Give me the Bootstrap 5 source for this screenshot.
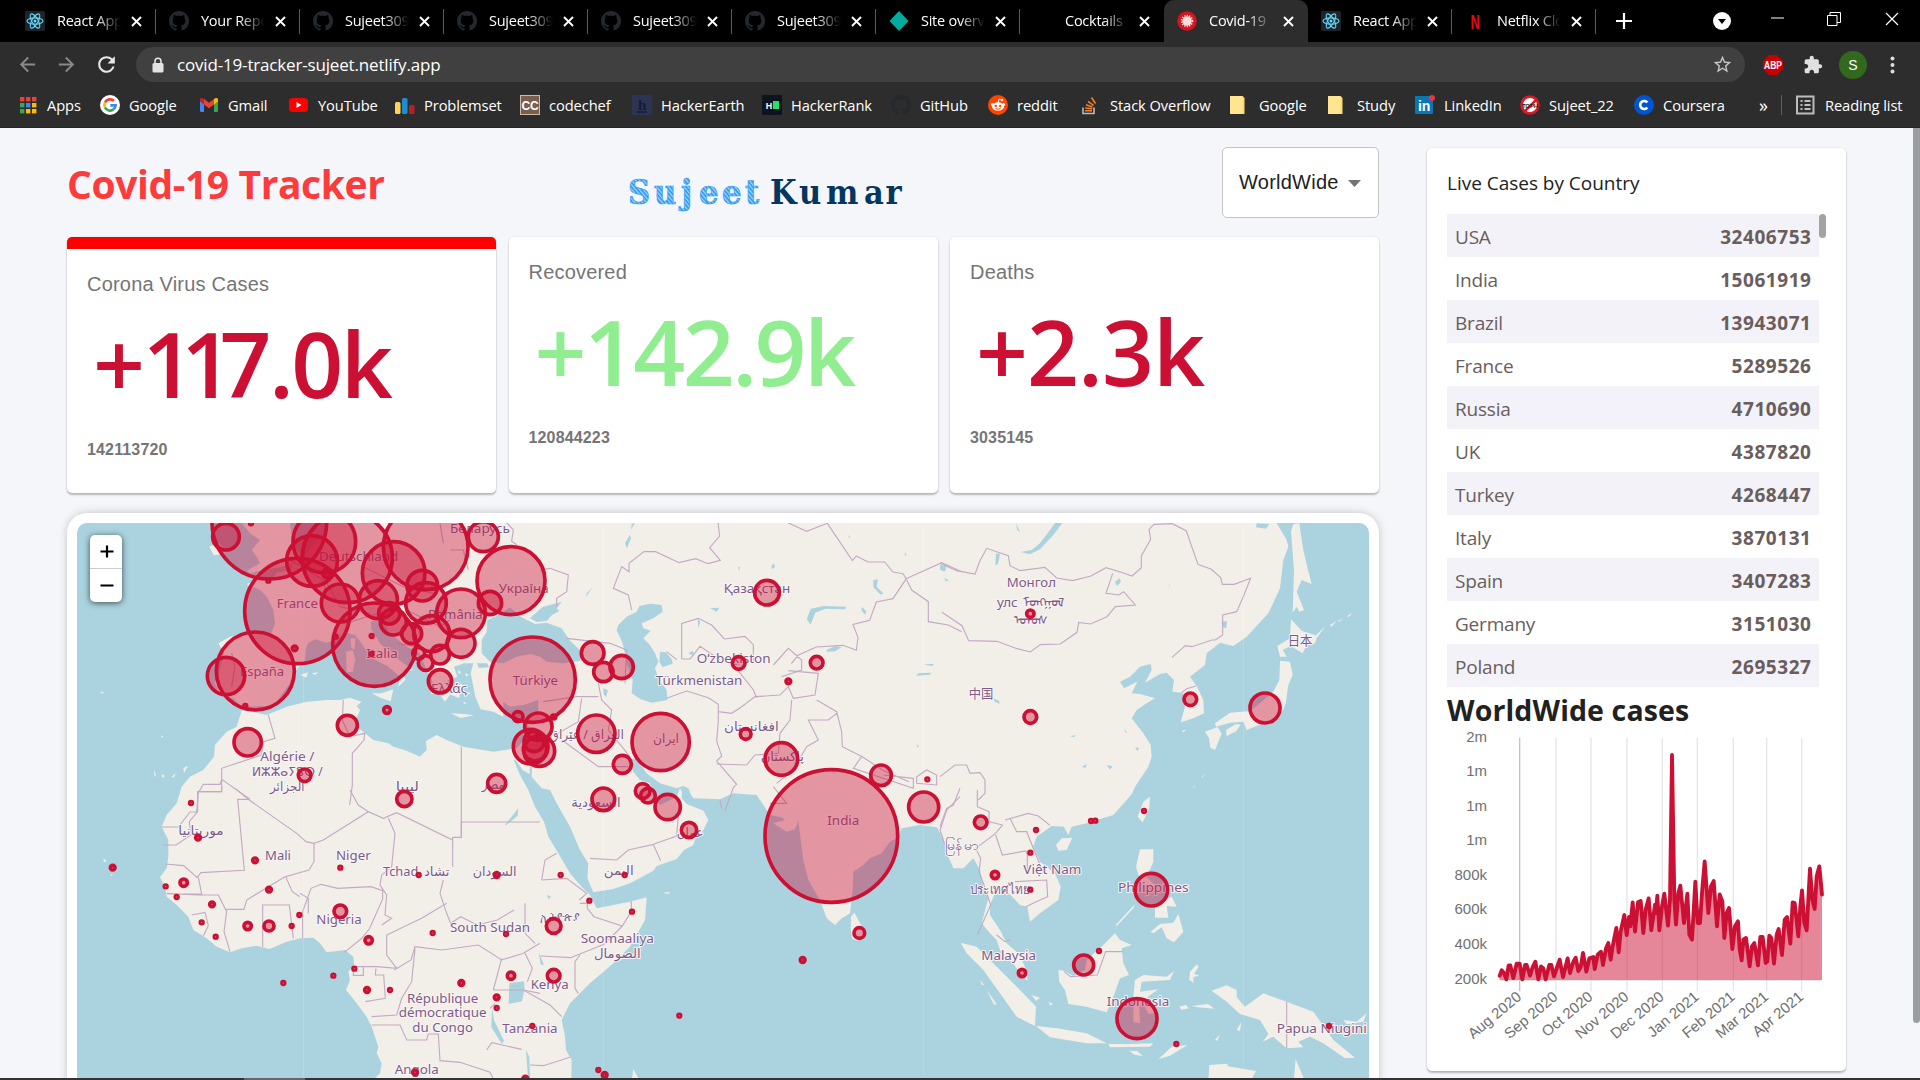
<!DOCTYPE html>
<html lang="en">
<head>
<meta charset="utf-8">
<title>Covid-19 Tracker</title>
<link href="https://cdn.jsdelivr.net/npm/bootstrap@5.3.0/dist/css/bootstrap.min.css" rel="stylesheet">
<style>
body{height:1080px;width:1920px;overflow:hidden;background:#f5f6fa;font-family:"Open Sans","Noto Sans",sans-serif;color:#212121}
svg{display:block;flex:none}
.tabstrip{height:42px;background:#000;padding-left:12px}
.tab{width:144px;height:42px;padding:0 14px 0 13px;color:#fff;font-size:14.5px;letter-spacing:-.25px;position:relative}
.tab:not(.on):not(.nosep)::after{content:"";position:absolute;right:0;top:9px;width:1px;height:25px;background:#5a5a5a}
.tab.on{background:#2d2d2d;border-radius:10px 10px 0 0}
.tab-name{width:64px;margin-left:12px;overflow:hidden;white-space:nowrap;-webkit-mask-image:linear-gradient(90deg,#000 60%,transparent)}
.toolbar{height:44px;background:#2d2d2d;padding-top:5px}
.toolbar-nav{height:35px;padding-left:16px}
.toolbar-ext{height:35px}
.omni{height:35px;width:1609px;background:#404040;border-radius:18px;margin-left:17px;padding:0 12px 0 15px;color:#fff;font-size:17px;letter-spacing:-.17px}
.bookmarks{height:42px;background:#2d2d2d;color:#fff;font-size:14.7px;letter-spacing:-.1px;padding:0 0 3px 18px;border-bottom:1px solid #232323}
.bm{white-space:nowrap}
.bm svg{margin-right:9px}
.page{height:950px;padding:19px 0 0 67px;overflow:hidden}
.main-col{width:1312px}
.head-row{height:90px}
.brand{font-size:39px;font-weight:700;color:#fc3c3c;letter-spacing:-.4px;line-height:1;margin-top:17px;width:500px}
.logo{margin-left:-234px}
.country-pick{width:157px;height:71px;border:1px solid #c4c4c4;border-radius:5px;background:#fff;font-family:"Liberation Sans",Arial,sans-serif;font-size:20px;padding:0 0 2px 16px;letter-spacing:.25px}
.stat{border:0;border-radius:5px;height:256px;background:#fff;box-shadow:0 2px 2px rgba(0,0,0,.24),0 0 2px rgba(0,0,0,.12);padding:23px 20px 0;overflow:hidden;flex:1 1 0}
.stat.active{border-top:12px solid red}
.stat-label{font:20px/24px "Liberation Sans",Arial,sans-serif;color:#757575;letter-spacing:.2px}
.stat-num{font-size:91px;font-weight:600;line-height:100px;color:#cc1034;margin-top:17px;padding-left:6px;letter-spacing:-2.6px;white-space:nowrap}
.stat-num.good{color:#90ee90}
.stat-num.wide{letter-spacing:-1px}
.tight{letter-spacing:-13.500px}
.stat-total{font:bold 16px/20px "Liberation Sans",Arial,sans-serif;color:#757575;margin-top:27px;letter-spacing:.15px}
.mapbox{margin-top:20px;height:600px;border-radius:20px;background:#fff;padding:10px;box-shadow:0 0 10px -1px rgba(0,0,0,.25)}
.mapbox-in{position:relative;border-radius:10px;overflow:hidden;height:590px}
.zoomer{position:absolute;left:13px;top:12px;width:32px;border-radius:5px;background:#fff;box-shadow:0 1px 6px rgba(0,0,0,.65);overflow:hidden}
.zoomer div{height:33px;padding-left:2px}
.zoomer div:first-child{border-bottom:1px solid #ccc;height:34px}
.side{width:419px;height:923px;border:0;border-radius:5px;background:#fff;margin:1px 0 0 48px;padding:20px;box-shadow:0 2px 2px rgba(0,0,0,.24),0 0 2px rgba(0,0,0,.12);position:relative}
.side-title{font-size:19px;line-height:30px;letter-spacing:-.02px;height:46px}
.crow{height:43px;width:372px;padding:3px 8px 0;font-size:19px;color:#6a5d5d;letter-spacing:-.2px}
.crow:nth-child(odd){background:#f3f2f8}
.crow b{font-weight:700;letter-spacing:.55px;margin-right:-.5px}
.list-thumb{position:absolute;left:392px;top:66px;width:7px;height:24px;border-radius:4px;background:#a3a3a3}
.chart-title{font-size:28.5px;font-weight:700;line-height:36px;margin:5px 0 0;letter-spacing:.12px}
.pagebar{width:7px;height:895px;background:#9b9ea1;margin-left:auto;margin-top:-19px;border-radius:0 0 4px 4px}
.task{height:2px;background:#333}
.task i{display:block;width:61px;height:2px;margin-left:244px;background:#666}
.lbl text{font-family:"Noto Sans","DejaVu Sans","Noto Sans CJK SC",sans-serif;fill:#7d5c84;stroke:#f8f5f8;stroke-width:6px;paint-order:stroke;stroke-linejoin:round;font-size:39px}
.bord{fill:none;stroke:#c3aac3;stroke-width:3.4}
.land{fill:#f2efe9}.sea{fill:#aad3df}
.pin{fill:#cc1034;fill-opacity:.4;stroke:#cc1034;stroke-width:11}
.axis text{font-family:"Liberation Sans",Arial,sans-serif;fill:#707070;font-size:45px;text-anchor:end}
</style>
<script src="https://cdn.jsdelivr.net/npm/bootstrap@5.3.0/dist/js/bootstrap.bundle.min.js"></script>
</head>
<body>
<header>
  <div class="tabstrip d-flex" id="tabs"></div>
  <div class="toolbar d-flex align-items-start">
    <div class="toolbar-nav d-flex align-items-center">
      <svg width="23" height="23" viewBox="0 0 24 24" fill="#8a8a8a"><path d="M20 11H7.83l5.59-5.59L12 4l-8 8 8 8 1.41-1.41L7.83 13H20z"/></svg>
      <svg class="ms-3" width="23" height="23" viewBox="0 0 24 24" fill="#8a8a8a"><path d="M4 13h12.17l-5.59 5.59L12 20l8-8-8-8-1.41 1.41L16.17 11H4z"/></svg>
      <svg class="ms-3" width="25" height="25" viewBox="0 0 24 24" fill="#e8e8e8"><path d="M17.65 6.35A7.96 7.96 0 0 0 12 4a8 8 0 1 0 7.73 10h-2.08A6 6 0 1 1 12 6c1.66 0 3.14.69 4.22 1.78L13 11h7V4z"/></svg>
    </div>
    <div class="omni d-flex align-items-center">
      <svg width="14" height="16" viewBox="0 0 14 16"><rect x="1.500" y="6" width="11" height="9.500" rx="1.500" fill="#e4e4e4"/><path d="M4 7V4.200a3 3 0 0 1 6 0V7" fill="none" stroke="#e4e4e4" stroke-width="1.600"/></svg>
      <span style="margin-left:12px">covid-19-tracker-sujeet.netlify.app</span>
      <svg class="ms-auto" width="21" height="21" viewBox="0 0 24 24" fill="#c8c8c8"><path d="M22 9.240l-7.190-.620L12 2 9.190 8.630 2 9.240l5.460 4.730L5.820 21 12 17.270 18.180 21l-1.630-7.030zM12 15.400l-3.760 2.270 1-4.280-3.320-2.880 4.380-.380L12 6.100l1.710 4.040 4.380.380-3.320 2.880 1 4.280z"/></svg>
    </div>
    <div class="toolbar-ext d-flex align-items-center">
      <svg style="margin-left:17px" width="22" height="22" viewBox="0 0 22 22"><path d="M7 1h8l6 6v8l-6 6H7l-6-6V7z" fill="#c70000"/><text x="11" y="15" font-size="10.500" font-weight="bold" fill="#fff" text-anchor="middle" textLength="18" lengthAdjust="spacingAndGlyphs" font-family="Liberation Sans">ABP</text></svg>
      <svg style="margin-left:19px" width="20" height="20" viewBox="0 0 24 24" fill="#e0e0e0"><path d="M20.500 11H19V7c0-1.100-.9-2-2-2h-4V3.500C13 2.120 11.880 1 10.500 1S8 2.120 8 3.500V5H4c-1.100 0-1.990.9-1.990 2v3.800H3.500c1.490 0 2.700 1.210 2.700 2.700s-1.210 2.700-2.700 2.700H2V20c0 1.100.9 2 2 2h3.800v-1.500c0-1.490 1.210-2.700 2.700-2.700 1.490 0 2.700 1.210 2.700 2.700V22H17c1.100 0 2-.9 2-2v-4h1.500c1.380 0 2.500-1.120 2.500-2.500S21.880 11 20.500 11z"/></svg>
      <svg style="margin-left:16px" width="28" height="28" viewBox="0 0 28 28"><circle cx="14" cy="14" r="14" fill="#33691e"/><text x="14" y="19" font-size="14" fill="#fff" text-anchor="middle" font-family="Liberation Sans">S</text></svg>
      <svg style="margin-left:23px" width="5" height="18" viewBox="0 0 5 18" fill="#ddd"><circle cx="2.500" cy="2.500" r="2"/><circle cx="2.500" cy="9" r="2"/><circle cx="2.500" cy="15.500" r="2"/></svg>
    </div>
  </div>
  <div class="bookmarks d-flex align-items-center" id="bms"></div>
</header>

<div class="page d-flex align-items-start">
  <div class="main-col">
    <div class="head-row d-flex justify-content-between">
      <h1 class="brand mb-0">Covid-19 Tracker</h1>
      <svg width="300" height="50" viewBox="0 0 300 50" class="logo mt-3">
        <defs><pattern id="hatch" width="3" height="3" patternUnits="userSpaceOnUse" patternTransform="rotate(50)"><rect width="3" height="3" fill="#a9d6fa"/><rect width="3" height="1.600" fill="#2196f3"/></pattern></defs>
        <g font-family="DejaVu Serif Condensed,DejaVu Serif" font-weight="bold" font-size="34">
          <text y="41" x="0 26 53 71 94 117" fill="url(#hatch)" stroke="#2e9cf4" stroke-width=".7">Sujeet</text>
          <text y="41" x="142 171 198 236 257.500" fill="#04375f">Kumar</text>
        </g>
      </svg>
      <div class="country-pick d-flex align-items-center">WorldWide<svg width="13" height="7" viewBox="0 0 13 7" style="margin:4px 0 0 9px"><path d="M0 0h13L6.500 7z" fill="#757575"/></svg></div>
    </div>
    <div class="d-flex" style="gap:12.500px">
      <div class="stat active"><div class="stat-label">Corona Virus Cases</div><div class="stat-num">+<span class="tight">11</span>7.0k</div><div class="stat-total">142113720</div></div>
      <div class="stat"><div class="stat-label">Recovered</div><div class="stat-num good">+142.9k</div><div class="stat-total">120844223</div></div>
      <div class="stat"><div class="stat-label">Deaths</div><div class="stat-num wide">+2.3k</div><div class="stat-total">3035145</div></div>
    </div>
    <div class="mapbox"><div class="mapbox-in">
      <svg width="1292" height="590" viewBox="51 39 3876 1770">
        <rect x="51" y="39" width="3876" height="1770" class="land"/>
        <!-- Atlantic, Mediterranean -->
        <path class="sea" d="M51 39H805L792 75 765 95 735 135 700 150 692 180 650 188 640 205 608 200 590 190 578 215 560 222 600 240 622 262 640 300 645 340 635 368 560 370 510 380 475 400 492 430 482 470 465 520 482 556 520 565 545 592 600 588 645 592 660 560 690 520 700 490 735 450 738 415 745 398 765 388 800 398 830 386 860 368 885 375 905 400 930 440 985 470 1020 500 1015 530 1036 510 1030 490 1060 480 1030 460 990 430 960 400 935 360 932 335 965 330 990 370 1040 410 1080 430 1095 470 1110 500 1130 540 1155 575 1166 560 1176 545 1162 512 1192 500 1182 470 1212 460 1240 460 1232 490 1246 560 1262 598 1300 605 1330 620 1330 575 1350 590 1390 585 1435 570 1435 605 1410 622 1400 680 1370 715 1300 725 1210 710 1160 690 1130 675 1098 693 1100 720 1080 740 1040 722 1000 710 985 700 940 690 915 670 893 652 885 635 900 600 890 588 905 575 870 563 840 570 800 570 740 575 680 590 620 615 575 605 545 602 530 650 500 665 465 705 462 740 430 780 390 800 365 830 353 870 350 880 320 915 305 950 325 990 325 1040 320 1075 300 1102 315 1130 320 1160 350 1185 385 1220 400 1260 440 1285 470 1310 510 1327 545 1315 590 1307 628 1317 680 1295 720 1285 760 1283 780 1300 800 1327 855 1320 880 1340 882 1365 865 1385 870 1410 858 1440 890 1480 920 1520 935 1550 955 1610 950 1630 965 1660 960 1690 945 1704V1810H51Z"/>
        <g class="land">
          <path d="M448 110l28-12 20 20-10 14-25 4zM545 39H690L700 110 722 130 700 160 660 172 620 178 570 190 560 182 600 160 590 140 575 120 600 90 570 70z"/>
          <path d="M858 425l20-5 8 30-8 35-18 2zM872 385l14 0-2 32-10-2zM935 550l30 0 35-12-8 36-30-10zM1162 550l40-15-4 30zM1172 610l40 2 30 4-40 8zM722 495l22-8-6 16zM755 490l20-3-10 8zM1356 625l40-8-20 16z"/>
          <path d="M282 780l6 14-4 8zM305 792l10 6-8 6zM335 800l12-10-6 14zM370 775l14-8-12 22zM130 1045l10 8-8 4zM175 1055l8 10zM150 1095l8-4-2 8z"/>
          <path d="M1195 478l8 10-8 4zM1215 490l12 4-8 6zM1200 520l10 6-8 4zM1225 545l8 6-8 2zM1210 575l10 4-8 4zM303 676l8 4-6 3zM120 545l14 3-8 3z"/>
        </g>
        <!-- Black Sea, Caspian, Central Asian lakes -->
        <g transform="translate(1260 0)" class="sea">
          <path d="M22 330 50 318 90 292 125 322 165 342 200 338 245 355 268 390 300 420 302 452 250 460 200 455 180 440 150 432 110 440 70 460 30 455 5 430 5 390 20 365zM150 325l38-34 57-16-15 20 8 8-22 12-16 18-30 3zM-10 460l32 0 5 12-30 2z"/>
          <path d="M415 345 440 320 470 305 478 288 510 281 545 285 548 305 520 325 485 340 490 355 512 362 490 385 510 405 525 430 535 455 525 475 537 510 560 540 562 570 515 578 482 568 455 550 458 510 440 460 428 400 410 360zM540 425l18 2 18 22 2 12-30 10-10-15z"/>
          <path d="M980 328l12-32 40-8 66 2-2 8-60-2-30 12-14 36zM1040 420l25-12 20 4-20 12-24 1zM1380 165l18 2-4 18-14-6zM655 355l-2-30 8 12zM625 430l14-8 2 16zM690 295l28-2-8 12zM435 100l14-25 4 10-12 30zM320 250l18-18-20 28zM1180 210l14-2-4 22 20 20-8 4-22-22zM1145 290l14 14-4 10-10-12zM1315 490l40-2-6 6-40 3zM1330 463l32-1-6 6zM875 165l10-3-2 12-8 3zM370 535l14 6-6 20-8-10zM455 42l10-3-12 20zM775 170l6 2-4 12zM1310 705l8 2-6 6zM1105 75l6 6-4 4zM1275 125l5 14-6-4z"/>
        </g>
        <!-- Red Sea, Gulf, Arabian Sea, Bay of Bengal -->
        <g transform="translate(1260 840)">
          <path class="sea" d="M100 -92 108 -88 128 -60 148 -48 150 -72 156 -68 155 -40 185 -5 210 0 230 40 270 110 300 180 325 220 322 265 340 307 400 297 450 280 520 242 530 228 590 207 612 180 640 165 645 150 670 120 685 90 670 62 620 42 605 25 606 5 600 -5 590 20 570 30 540 45 520 25 510 -20 480 -30 460 -55 445 -90 470 -95 500 -50 540 -20 590 -5 610 -12 625 -5 632 12 640 25 720 28 760 10 830 15 850 45 870 75 905 82 915 90 880 100 920 125 945 118 955 92 962 150 970 210 985 270 1020 330 1040 385 1065 405 1085 385 1110 370 1118 300 1120 245 1150 225 1170 205 1205 190 1230 155 1250 145 1265 115 1320 105 1370 112 1390 150 1400 190 1420 235V970H272L275 810 258 780 255 740 245 690 270 640 330 580 400 520 450 470 495 390 500 322 450 335 400 345 350 355 330 315 300 285 270 250 235 190 205 140 192 95 165 50 145 0 120 -45Z"/>
          <path class="land" d="M1113 380l10-12 25 45 4 28-20 12-16-8-4-30zM460 838l20 35 12 60h-46zM548 308l22-2-6 6zM1385 290l8-2-4 40-8 30z"/>
          <path class="sea" d="M88 580l44-6 2 22-8 38-40 8zM36 650l6 40 30 62-6 10-32-50zM138 780l10 20 2 64h-6zM176 485l16 40-10-2zM200 315l12 4-4 10zM75 105l40-50-2 22-34 28z"/>
        </g>
        <!-- Pacific coast -->
        <g transform="translate(2640 0)">
          <path class="sea" d="M568 870 585 830 625 770 635 740 632 705 610 670 575 625 590 600 620 580 645 565 600 552 575 550 592 515 552 535 540 515 570 500 600 470 632 462 635 480 615 518 660 492 680 488 702 510 697 545 730 548 735 590 722 637 760 625 792 610 790 570 770 528 750 500 795 465 800 430 840 398 880 408 920 380 985 310 1020 235 1030 150 1045 110 1040 90 1010 39H1287V880H560Z"/>
          <path class="sea" d="M242 126 275 120 300 100 330 60 345 39 367 39 340 75 300 118 270 133zM168 130l12 2-6 30-8 4zM525 215l14-10 4 10-12 14zM845 335l16-2-2 22-12-4zM0 165l18 5-2 12-16-2zM950 40l38 2-10 14-30-4zM160 565l18 8 0 8-14-6zM500 765l18 4-8 10zM585 712l12 2-4 10zM425 770l16-8-4 12zM552 655l8 12-4 2zM228 40l12 25-8-4zM390 678l18-2-6 6zM686 230l6-14-4 14zM12 205l16 6-10 3z"/>
          <path class="land" d="M1053 65 1060 42 1078 40 1090 120 1104 180 1115 222 1085 210 1070 245 1092 300 1078 305 1070 290 1058 308 1062 180zM1053 328 1085 362 1132 378 1125 400 1100 405 1088 430 1052 408 1028 420 1040 440 1020 440 1012 408 1050 385zM1020 452 1050 455 1058 495 1045 525 1038 575 1030 600 990 632 920 660 910 635 870 638 828 650 825 640 870 608 930 603 960 580 1000 545 1018 510zM858 660l30-18 14 2-14 20-28 14zM795 665l38-14 12 20-20 48-14-6-4-30zM1125 378l30-28-22 30zM1170 345l20-12-16 18zM1195 332l14-6-12 10zM1222 318l14-10-10 14zM1245 300l10-10zM725 662l14-3-8 8zM785 800l12-12-10 14zM755 838l12-16-10 18z"/>
        </g>
        <!-- South-East Asia -->
        <g transform="translate(2640 840)">
          <path class="sea" d="M-10 970V110L10 150 20 190 40 235 70 235 100 205 120 240 130 290 145 325 125 400 150 430 170 450 180 480 215 515 240 548 262 572 262 545 235 490 200 460 180 420 150 375 150 345 165 310 195 300 215 318 240 345 262 350 270 395 300 370 355 330 362 290 345 250 300 215 280 170 290 140 335 108 372 110 385 135 395 110 440 100 520 75 560 30 590 -5 1290 -10V970Z"/>
          <path class="land" d="M593 80 610 35 630 20 628 55 608 97zM348 165 365 145 397 143 380 180 355 182zM600 178 640 178 640 215 620 262 650 290 640 300 600 270 588 230zM527 405 585 342 580 355 530 408zM632 425 660 402 700 398 715 372 730 425 702 457 680 445 665 412 640 430zM645 345l50-25 15 30-30-2 5 35-40 0zM62 458 110 470 180 540 240 600 288 650 285 708 230 680 180 610 130 540 80 490zM288 708 350 715 440 730 500 760 440 760 330 742zM505 762l60 0 75-2-10 10-120 2zM655 808 695 770 742 765 690 797zM568 782l25 2 15 14-25-4zM355 540 372 542 400 558 435 540 440 510 490 465 525 430 540 450 575 465 545 475 550 520 567 555 540 565 520 620 500 667 440 650 385 642 375 600 358 575zM580 620 585 570 610 555 680 560 702 543 690 570 605 575 600 605 655 598 622 622 645 670 625 672 612 645 598 650 600 700 580 697zM750 545l20-22 6 8-14 20 16 6-18 4 0 18-12-10zM718 650l20-5 8 10-22 4zM755 648l50-6 18 14-50-4zM815 602 860 586 890 600 890 622 915 650 970 610 1040 635 1120 665 1145 700 1180 750 1245 803 1215 805 1150 760 1110 740 1075 755 1090 772 1040 775 1000 740 968 755 985 732 960 690 900 672 860 635zM1210 690l40 5 30-25-10 25-50 8zM890 720l14-25-4 28zM825 750l14-16-6 18zM808 825l55-4 0 8 85 14-12 22v100H800zM1067 808l24 56v100h-38zM120 570l12 14-6 2zM140 600l30 42-8 2zM275 615l25 8-12 10zM325 635l14 6-8 6z"/>
        </g>
        <!-- country borders -->
        <g class="bord">
          <path d="M625 615l20 70-35 10-5 40-120 40v70h-72M415 848l15-25h50l5-15 85 60M850 570l-3 60 22 50 45-10-2 20-35 40 0 95-8 60M1204 710v270M415 846l-5 60h-20l-35 45-50 0M1010 400l60 10M860 340l60-20 70-20M1040 300l100 50 60-40M790 200l50 90 90 20M690 150l100 60 10 60M1170 120l40 0 15 60M515 430l10 40-10 60M1140 40l10 60M910 170l120 60 90 20M1340 39l20 20-5 35 15 10"/>
          <g transform="translate(0 840)"><path d="M485 -10v15h-72v60l-25 30 5 40-45 30h-40M525 -5 565 28 710 130 738 155 762 160 790 150 925 65 970 85 1010 68 1178 150V142h26V96H1440M565 28h-32l20 213-130 7-12 14-40-35-55-5M870 0l25 45 30 20M985 85l20 45-10 100-30 25-5 30 20 30-5 60 20 10-30 20M762 160v55l-15 25-70 20 20 45 22 15M745 370V325l-25-15M415 262l10 50-60 0-45 0M675 260l-50 30-65 40-8 28-55 0M608 470V345h80l12 100M728 445v-80l25-70 30-12 50 12 100-5 35 12 0 25-40 90-25 30-50 40M320 310l95 5 60 0 25 50-8 60 18 60M395 375l40-8 10 40-15 30M1178 150v80M1150 270l-10 40 20 60 12 30 30-20 50 25 60-15 50-30M1160 340l-75 45-105 50 0 60 30 40-60-5-70 0v26h30v-26M1440 460l-50 30-65 20-70-45-110 15-80-10-12 40-50 30M1065 475l-10 100-30 50-15 50-75 5M948 535l-2 20 25 0 5 70-60 10M935 705h85l20 45 60 0 5-18 30 0 5 80 60 5 90 30 10 20M1300 600l25-95M1300 600h90l50 10M1290 655l15-15M1280 780l15-22 90 20"/></g>
          <g transform="translate(1260 0)"><path d="M455 300l-10-45-45-20 25-65 22 15 0-25 45-35h35l70 33 50-12 37 15 37-10-32-38 30-35-5-40 50-5M925 39l55 25 62-24 75 112 12-14 35 18 50 0 25 30 30 5 10 15-40 60-50 10-20 55-50 12 15 40-5 38-40-15-80 5-55 25-20 25M1275 208l110-50 60 27M1280 210l15 30 50 35 0 60 60 10 40 20M605 447V340l50-15 40 20 38 42 62-8 25 25v50l-60 10 60 75 10 25M560 565l60-22 65 20 30 20 0 50-5 60 15 45-15 15 60 70-10 10-25 70M715 605l40 5 30-20 40-30 75-5 25-25 15 35 65-10 10-65-90-8M935 570l-5 60-30 40-5 60-70 5-25 30-90-3M1010 570l60 35 15 60 2 45 60 30 60 40 80 35M890 820l50-40 40-70 35-20-30-60 60 0 25-20M260 385l130 15 50 20-5 100M355 520l10 50 30 30-10 60 65 80M190 575l100-15 65 0M305 565l-10 70-70 40 130 95 90 0M605 447h25l30-38 60 40M560 425l30 24M180 180l30-5 55 20-5 50-30 20 0 25M1145 740l-25 35 180 60 0-30-90-10M1310 800l30-20 30 15 0 30-60-5zM880 465l45-50 40 35 0 30-60 20M720 870l5 25"/></g>
          <g transform="translate(1260 840)"><path d="M185 270l10-60 35-20M185 270l75-5 60 45-22 20M300 340h22l0 15 20 25 85 28 27-44v-30M427 408l-55 55-100 40-90-5M135 340l0 90 30 30M135 490l22 45-15 40M300 495l-15 20v80l10 15M130 600l80 45 35 35M330 205l80 5 35-30 75-17 22 50M520 163l70-25 5-60M520 25l-10 15M150 825l40 2 80-25M870 40h50l-40-50M1380 120l20-60 40-40"/></g>
          <g transform="translate(2640 0)"><path d="M0 160l50 22 55 10 15-40 20-37 65 22 5 30 30 15 75-10 35 32 48 8 55-14 45-25 50 15 28 10 28-25 0-35 28-50-5-30 15-15 55-2 42 22 35 100 40 15 28 25 5 20 35 0 50-18-20 50-22 50-42 10 0 60-22 15-10 0-60 20-20-3-40 35M518 190l-20 60 38 5 15-10 35 40-60 5-25 30-50 22-35-5-5 30-50 35-60 2-30 22-40-10-60-22-85-2-20-45-60-40M725 548l15-12 28-8M0 800l45-35 35 0 10 25 30-2 15 22v40l-20 20"/></g>
          <g transform="translate(2640 840)"><path d="M0 110l20-55 20-10 20-50M112 0v50l35 15 0 30 40 10-20 25-60 45 15 30-5 40 15 40 20 60-40 90M167 135l20 60 70-12 5 10 0 60M195 90l70-20 30 8 35 28M210 85l20 40 30 0 20 50 30 75M225 275l95-5 3 50-35 15-30 15M170 435l25 20 15-5M372 545l20 15 80-5 25-70h50M1040 635v140M20 180l-20-60"/></g>
        </g>
        <g class="lbl" id="labels"></g>
        <g fill="#fff" opacity=".2"><path d="M729 39h2V1810h-2zM1629 39h2V1810h-2zM2589 39h2V1810h-2zM3549 39h2V1810h-2z"/></g>
        <g id="pins"></g>
      </svg>
      <div class="zoomer"><div class="d-flex align-items-center justify-content-center"><svg width="14" height="14"><path d="M7 .5v12M.5 6.500h13" stroke="#000" stroke-width="2.200"/></svg></div><div class="d-flex align-items-center justify-content-center"><svg width="14" height="14"><path d="M.5 6.500h13" stroke="#000" stroke-width="2.200"/></svg></div></div>
    </div></div>
  </div>

  <aside class="side">
    <div class="side-title">Live Cases by Country</div>
    <div id="rows"></div>
    <div class="list-thumb"></div>
    <h3 class="chart-title">WorldWide cases</h3>
    <svg width="386" height="320" viewBox="81 145 1158 960" class="axis">
      <g id="grid" stroke="#e6e6e6" stroke-width="4"></g>
      <path id="area" fill="#cc1034" fill-opacity=".5"/>
      <path id="line" fill="none" stroke="#cc1034" stroke-width="11.500" stroke-linejoin="round" stroke-linecap="round"/>
      <g id="ax"></g>
    </svg>
  </aside>
  <div class="pagebar"></div>
</div>
<div class="task"><i></i></div>

<script>
const $=id=>document.getElementById(id);
const svg=(b,w=20,v='0 0 20 20')=>`<svg width="${w}" height="20" viewBox="${v}">${b}</svg>`;
const T=(x,y,s,c,t,f='Liberation Sans')=>`<text x="${x}" y="${y}" font-size="${s}" font-weight="bold" fill="${c}" text-anchor="middle" font-family="${f}">${t}</text>`;
const cat='M8 0C3.58 0 0 3.58 0 8c0 3.54 2.29 6.53 5.47 7.59.4.07.55-.17.55-.38 0-.19-.01-.82-.01-1.49-2.01.37-2.53-.49-2.69-.94-.09-.23-.48-.94-.82-1.13-.28-.15-.68-.52-.01-.53.63-.01 1.08.58 1.23.82.72 1.21 1.87.87 2.33.66.07-.52.28-.87.51-1.07-1.78-.2-3.64-.89-3.64-3.95 0-.87.31-1.59.82-2.15-.08-.2-.36-1.02.08-2.12 0 0 .67-.21 2.2.82.64-.18 1.32-.27 2-.27s1.36.09 2 .27c1.53-1.04 2.2-.82 2.2-.82.44 1.1.16 1.92.08 2.12.51.56.82 1.27.82 2.15 0 3.07-1.87 3.75-3.65 3.95.29.25.54.73.54 1.48 0 1.07-.01 1.93-.01 2.2 0 .21.15.46.55.38A8.01 8.01 0 0 0 16 8c0-4.42-3.58-8-8-8z';
const IC={
 react:svg('<rect width="20" height="20" rx="2" fill="#20232a"/><g fill="none" stroke="#61dafb" stroke-width="1.1"><ellipse cx="10" cy="10" rx="8" ry="3.1"/><ellipse cx="10" cy="10" rx="8" ry="3.1" transform="rotate(60 10 10)"/><ellipse cx="10" cy="10" rx="8" ry="3.1" transform="rotate(120 10 10)"/></g><circle cx="10" cy="10" r="1.5" fill="#61dafb"/>'),
 git:svg(`<path fill="#24292e" d="${cat}"/>`,20,'0 0 16 16'),
 netlify:svg('<path d="M10 0l9.500 10L10 20 .5 10z" fill="#00ad9f"/>'),
 none:svg(''),
 covid:svg('<circle cx="10" cy="10" r="9.800" fill="#d5151d"/><circle cx="10" cy="10" r="4.800" fill="#f7dede"/><circle cx="10" cy="10" r="5.500" fill="none" stroke="#f7dede" stroke-width="1.600" stroke-dasharray="1.200 1.300"/>'),
 netflix:svg(`<text x="10" y="17.500" font-size="21" font-weight="bold" fill="#e50914" text-anchor="middle" textLength="9" lengthAdjust="spacingAndGlyphs" font-family="Liberation Sans">N</text>`),
 apps:svg(['#ea4335','#ea4335','#ea4335','#34a853','#4285f4','#fbbc04','#34a853','#fbbc04','#fbbc04'].map((c,i)=>`<rect x="${2+i%3*6}" y="${2+(i/3|0)*6}" width="4.400" height="4.400" fill="${c}"/>`).join('')),
 google:svg('<circle cx="10" cy="10" r="10" fill="#fff"/><g fill="none" stroke-width="2.700"><path d="M14 6A5.600 5.600 0 0 0 5 7.500" stroke="#ea4335"/><path d="M5 7.500A5.600 5.600 0 0 0 5 12.500" stroke="#fbbc05"/><path d="M5 12.500A5.600 5.600 0 0 0 13.600 14.300" stroke="#34a853"/><path d="M13.600 14.300A5.600 5.600 0 0 0 15.600 10.300H10.300" stroke="#4285f4"/></g>'),
 gmail:svg('<path d="M1 4.500L5 7v10H2.200A1.200 1.200 0 0 1 1 16z" fill="#4285f4"/><path d="M19 4.500L15 7v10h2.800A1.200 1.200 0 0 0 19 16z" fill="#34a853"/><path d="M5 9.500V4l5 3.800L15 4v5.500l-5 3.800z" fill="#ea4335"/><path d="M1 4.800C1 3 3 2.500 5 4v5.500L1 6.500z" fill="#c5221f"/><path d="M19 4.800C19 3 17 2.500 15 4v5.500l4-3z" fill="#fbbc04"/>'),
 yt:svg('<rect x="0" y="3" width="19" height="14" rx="4" fill="#f00"/><path d="M7.500 7v6l5-3z" fill="#fff"/>'),
 cf:svg('<rect x="0" y="7" width="5.500" height="12" rx="1.500" fill="#fcd35a"/><rect x="7" y="3" width="5.500" height="16" rx="1.500" fill="#1f8dd0"/><rect x="14" y="10" width="5.500" height="9" rx="1.500" fill="#b81f24"/>'),
 cc:svg('<rect x=".5" y=".5" width="19" height="19" fill="#7a5f4c" stroke="#cbb9a6"/>'+T(10,14.500,12,'#fff','CC')),
 he:svg('<rect width="20" height="20" fill="#2c3454"/>'+T(10,15,15,'#141a3a','h','Liberation Serif')+'<path d="M5 17h10" stroke="#141a3a" stroke-width="1.500"/>'),
 hr:svg('<rect width="20" height="20" fill="#0e141e"/>'+T(7,13.500,9,'#fff','H')+'<rect x="11" y="6" width="6" height="8" fill="#1ee56d"/>'),
 reddit:svg('<circle cx="10" cy="10" r="10" fill="#ff4500"/><ellipse cx="10" cy="11.500" rx="6" ry="4.300" fill="#fff"/><circle cx="4.500" cy="9.500" r="1.600" fill="#fff"/><circle cx="15.500" cy="9.500" r="1.600" fill="#fff"/><circle cx="14" cy="5" r="1.300" fill="#fff"/><path d="M10 8l1-4 3 1" stroke="#fff" fill="none"/><circle cx="7.800" cy="11" r="1.200" fill="#ff4500"/><circle cx="12.200" cy="11" r="1.200" fill="#ff4500"/><path d="M7.500 13.500q2.500 1.500 5 0" stroke="#ff4500" fill="none"/>'),
 so:svg('<path d="M2 12.500v6h11v-6" fill="none" stroke="#bcbbbb" stroke-width="1.600"/><path d="M4 15.800h7M4.200 13l7 .8M5 9.800l6.500 2.200M7 6.300l5.500 4M10.500 2.500l4 6" stroke="#f48024" stroke-width="1.600"/>'),
 folder:svg('<path d="M0 1h12.500l2 2v16H0z" fill="#f8dc7a"/><path d="M0 1h12.500v12l-1 6H0z" fill="#ffe58f"/>'),
 li:svg('<rect x="0" y="1" width="18" height="18" rx="1" fill="#0a77b5"/>'+T(9,16,14,'#fff','in')+'<circle cx="17" cy="3" r="3" fill="#e34"/>'),
 spoj:svg('<circle cx="10" cy="10" r="9.800" fill="#d31c28"/><circle cx="10" cy="10" r="7" fill="#fff"/><path d="M5 16L16 5" stroke="#d31c28" stroke-width="2.500"/>'+T(10,12.500,6,'#222','TOPH')),
 coursera:svg('<circle cx="10" cy="10" r="10" fill="#0056d2"/><path d="M13.300 7.500a4 4 0 1 0 0 5" fill="none" stroke="#fff" stroke-width="2.600"/>'),
 list:svg('<rect x="1" y="1.500" width="16.500" height="17" fill="none" stroke="#bdbdbd" stroke-width="2"/><path d="M4.500 6h2M8.500 6h6M4.500 10h2M8.500 10h6M4.500 14h2M8.500 14h6" stroke="#bdbdbd" stroke-width="1.800"/>')
};
const X='<svg class="ms-auto" width="11" height="11"><path d="M1 1l9 9M10 1l-9 9" stroke="#fff" stroke-width="1.900"/></svg>';
$('tabs').innerHTML=[['react','React App'],['git','Your Repo'],['git','Sujeet309'],['git','Sujeet309'],['git','Sujeet309'],['git','Sujeet309'],['netlify','Site overv'],['none','Cocktails','nosep'],['covid','Covid-19','on'],['react','React App'],['netflix','Netflix Clo']]
 .map(t=>`<div class="tab ${t[2]||''} d-flex align-items-center">${IC[t[0]]}<div class="tab-name">${t[1]}</div>${X}</div>`).join('')
 +`<div class="d-flex align-items-center" style="padding-left:20px"><svg width="16" height="16"><path d="M8 0v16M0 8h16" stroke="#fff" stroke-width="2.200"/></svg>
 <svg style="margin-left:81px" width="18" height="18"><circle cx="9" cy="9" r="9" fill="#fff"/><path d="M5 7h8l-4 5z"/></svg>
 <svg style="margin-left:40px;margin-top:-6px" width="13" height="2"><path d="M0 1h13" stroke="#fff"/></svg>
 <svg style="margin-left:43px;margin-top:-4px" width="14" height="14"><path d="M.5 3.500h9.500v10H.5zM3 3.500V.5h10.500v10H10" fill="none" stroke="#fff"/></svg>
 <svg style="margin-left:44px;margin-top:-4px" width="14" height="14"><path d="M1 1l12 12M13 1L1 13" stroke="#fff" stroke-width="1.200"/></svg></div>`;
$('bms').innerHTML=[['apps','Apps',82],['google','Google',99],['gmail','Gmail',90],['yt','YouTube',106],['cf','Problemset',125],['cc','codechef',112],['he','HackerEarth',130],['hr','HackerRank',129],['git','GitHub',97],['reddit','reddit',93],['so','Stack Overflow',149],['folder','Google',98],['folder','Study',87],['li','LinkedIn',105],['spoj','Sujeet_22',114],['coursera','Coursera',125]]
 .map(b=>`<div class="bm d-flex align-items-center" style="width:${b[2]}px">${IC[b[0]]}<span>${b[1]}</span></div>`).join('')
 +`<div style="width:22px;font-size:18px;line-height:20px">»</div><div style="width:15px;height:20px;border-left:1px solid #5f5f5f"></div><div class="bm d-flex align-items-center">${IC.list}<span>Reading list</span></div>`;
$('rows').innerHTML=[['USA',32406753],['India',15061919],['Brazil',13943071],['France',5289526],['Russia',4710690],['UK',4387820],['Turkey',4268447],['Italy',3870131],['Spain',3407283],['Germany',3151030],['Poland',2695327]]
 .map(r=>`<div class="crow d-flex align-items-center justify-content-between"><span>${r[0]}</span><b>${r[1]}</b></div>`).join('');

/* map labels: centre x, baseline y, width, text */
const L=[[896,153,238,'Deutschland'],[1260,68,180,'Беларусь'],[712,294,124,'France'],[606,499,132,'España'],[1186,326,164,'România'],[966,444,94,'Italia'],[1167,548,108,'Ελλάς'],[1391,250,150,'Україна'],[1426,526,136,'Türkiye'],[682,754,162,'Algérie /'],[682,798,212,'ⵍⵣⵣⴰⵢⴻⵔ /'],[682,842,104,'الجزائر'],[1042,842,70,'ليبيا'],[1300,836,70,'مصر'],
[2091,249,200,'Қазақстан'],[2021,458,222,'Oʻzbekiston'],[1917,526,260,'Türkmenistan'],[2074,662,164,'افغانستان'],[2167,752,130,'پاکستان'],[1818,698,78,'ايران'],[1580,688,224,'العراق / عێراق'],[2350,944,96,'India'],[1608,892,148,'السعودية'],[1890,980,80,'عمان'],[1676,1094,90,'اليمن'],[1500,1232,118,'ኢትዮጵያ'],[1672,1300,220,'Soomaaliya'],[1672,1344,140,'الصومال'],[1469,1438,114,'Kenya'],[1410,1570,166,'Tanzania'],
[423,974,136,'موريتانيا'],[654,1050,78,'Mali'],[880,1051,104,'Niger'],[1022,1099,106,'Tchad'],[1130,1099,76,'تشاد'],[1304,1097,132,'السودان'],[837,1242,136,'Nigeria'],[1290,1266,240,'South Sudan'],[1148,1478,214,'République'],[1148,1522,264,'démocratique'],[1148,1567,182,'du Congo'],[1070,1692,132,'Angola'],
[2914,231,148,'Монгол'],[2842,290,62,'улс'],[2952,290,124,'ᠮᠣᠩᠭᠣᠯ'],[2913,346,100,'ᠤᠯᠤᠰ'],[2763,564,74,'中国'],[3720,406,74,'日本'],[2706,1020,104,'မြန်မာ'],[2977,1092,174,'Việt Nam'],[2820,1152,180,'ประเทศไทย'],[2846,1350,164,'Malaysia'],[3280,1147,212,'Philippines'],[3234,1488,188,'Indonesia'],[3785,1568,270,'Papua Niugini']];
$('labels').innerHTML=L.map(l=>`<text x="${l[0]-l[2]/2}" y="${l[1]}" textLength="${l[2]}" lengthAdjust="spacingAndGlyphs">${l[3]}</text>`).join('');

/* case circles, grouped by map section: offset x, offset y, [x,y,r]... */
const P=[[0,0,[[628,35,172],[498,80,40],[793,95,94],[756,153,76],[862,143,135],[1097,112,127],[1270,80,45],[1001,189,94],[1353,212,102],[712,303,158],[586,483,117],[498,498,56],[841,279,57],[955,269,57],[1087,227,46],[1098,279,61],[943,404,125],[988,310,32],[1000,336,39],[1055,371,30],[1203,310,73],[1290,279,35],[1115,371,54],[1203,400,42],[1097,459,22],[1076,430,18],[1140,434,28],[1140,514,35],[981,600,10],[862,646,30],[563,697,41],[734,796,19],[573,40,4],[625,212,4],[704,415,7],[827,380,4],[935,378,4],[935,432,4],[556,588,4],[1418,509,128],[800,190,12],[1310,820,27],[1033,867,23]]],
[1260,0,[[861,248,37],[776,459,19],[925,514,7],[1010,458,19],[338,429,34],[370,486,29],[425,471,35],[349,671,56],[542,696,86],[427,763,27],[797,672,16],[904,747,49],[1203,796,31],[1342,808,4],[175,650,41],[114,620,15],[221,621,6],[152,710,52],[178,723,46],[165,718,35],[162,695,30],[488,843,22]]],
[1260,840,[[504,17,22],[563,51,38],[370,28,34],[627,120,23],[1054,138,199],[1331,51,45],[1138,429,16],[968,510,7],[598,677,4],[242,255,4],[434,255,4],[328,332,4],[456,365,4],[221,408,22],[221,557,19],[50,255,7],[78,432,4],[93,557,11],[50,622,7],[50,654,4],[157,708,4],[355,840,4],[374,855,7],[136,866,7]]],
[0,840,[[393,39,4],[414,143,7],[585,211,7],[158,233,7],[841,233,4],[1076,255,4],[371,278,11],[317,289,4],[350,321,4],[456,343,7],[627,299,7],[425,397,4],[467,440,4],[563,408,11],[627,408,15],[718,375,4],[695,408,4],[841,364,19],[926,451,11],[1118,429,4],[883,536,4],[820,557,4],[670,579,4],[921,600,7],[990,600,4],[1204,579,7],[1065,847,7]]],
[2640,840,[[122,97,19],[288,120,4],[271,188,4],[165,255,11],[271,299,4],[453,93,4],[466,92,4],[612,63,4],[634,299,49],[477,483,4],[431,525,30],[246,549,11],[591,686,60],[709,762,4],[1167,708,4]]],
[2640,0,[[271,311,11],[271,621,19],[751,568,19],[975,594,45]]]];
$('pins').innerHTML=P.flatMap(g=>g[2].map(c=>`<circle class="pin" cx="${g[0]+c[0]}" cy="${g[1]+c[1]}" r="${c[2]}"/>`)).join('');

/* cases chart */
const D='239,888 245,872 252,880 259,899 266,857 271,857 280,895 290,852 299,852 307,899 315,856 320,856 330,888 338,862 346,846 355,899 363,860 370,866 377,899 388,856 394,856 402,890 410,866 419,840 429,892 443,836 450,880 460,846 467,834 475,874 482,862 489,820 499,876 508,836 520,832 524,868 533,825 543,816 549,856 558,806 565,790 572,840 578,800 589,745 596,818 602,755 613,706 620,766 627,712 631,740 638,668 645,756 654,668 662,664 670,760 677,690 686,656 694,752 705,675 708,700 712,648 718,752 726,680 733,642 744,738 750,660 756,226 763,660 768,735 775,640 781,618 792,730 802,642 808,765 816,780 826,606 833,730 840,730 846,640 854,545 865,700 873,620 881,604 891,740 899,644 907,665 913,775 920,700 927,685 937,808 945,740 954,725 959,810 965,842 970,780 978,775 989,860 996,800 1003,790 1014,857 1021,772 1028,772 1037,850 1042,845 1048,768 1054,775 1062,852 1070,765 1076,748 1086,826 1094,720 1101,712 1111,792 1118,668 1124,670 1135,770 1141,680 1146,632 1153,730 1160,752 1170,567 1177,660 1184,688 1190,590 1198,560 1206,645';
$('line').setAttribute('d','M'+D);$('area').setAttribute('d','M'+D+' 1206,901 239,901Z');
const G=[299,408,513,621,727,832,940,1040,1145],M=['Aug 2020','Sep 2020','Oct 2020','Nov 2020','Dec 2020','Jan 2021','Feb 2021','Mar 2021','Apr 2021'];
$('grid').innerHTML=G.map((x,i)=>`<path d="M${x} 174V935" ${i?'':'stroke="#c4c4c4"'}/>`).join('')+'<path d="M239 902H1206"/>';
$('ax').innerHTML=['2m','1m','1m','1m','800k','600k','400k','200k'].map((t,i)=>`<text x="201" y="${186+i*103.7}">${t}</text>`).join('')
 +G.map((x,i)=>`<text transform="translate(${x+8} 956) rotate(-40)">${M[i]}</text>`).join('');
</script>
</body>
</html>
